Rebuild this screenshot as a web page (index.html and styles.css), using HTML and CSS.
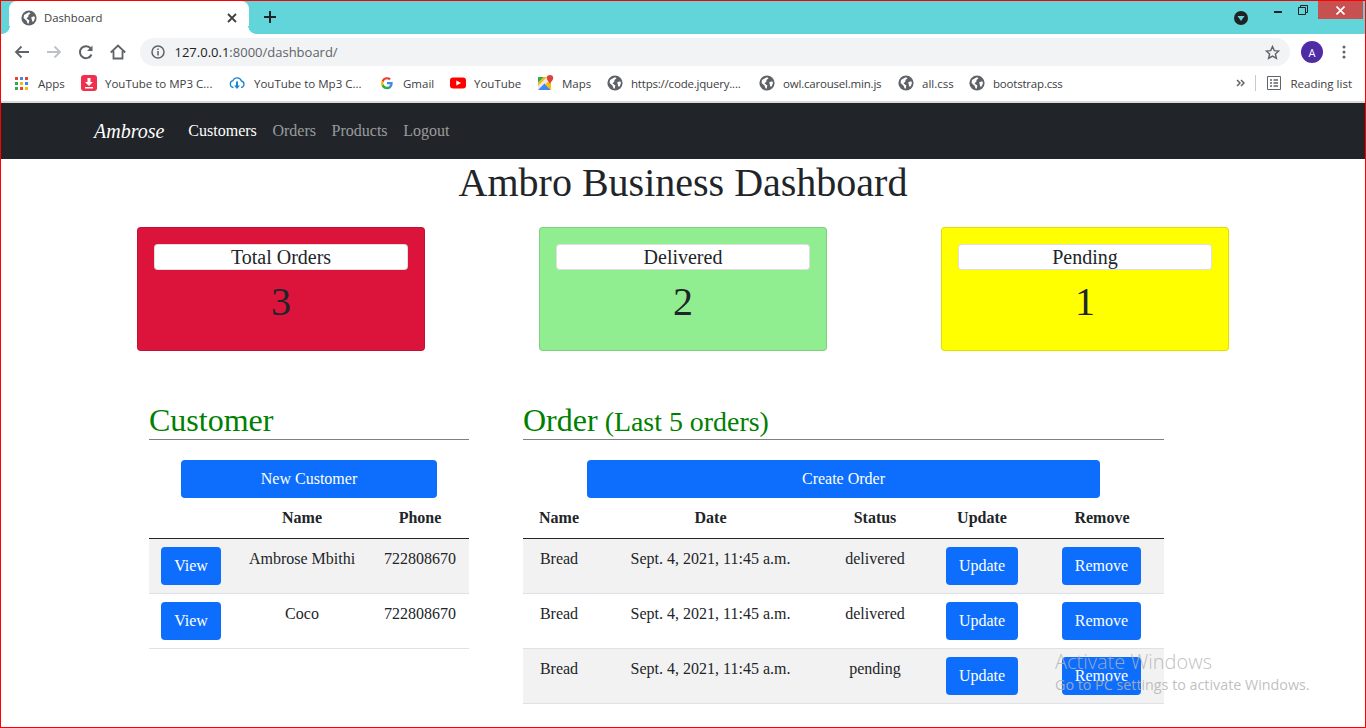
FILE: index.html
```html
<!DOCTYPE html>
<html lang="en">
<head>
<meta charset="utf-8">
<title>Dashboard</title>
<link rel="stylesheet" href="styles.css">
</head>
<body>
<div class="window">
  <svg width="0" height="0" class="defs"><defs>
    <symbol id="globe" viewBox="0 0 16 16"><circle cx="8" cy="8" r="7.6" fill="#5f6368"/><path d="M3 5 L6 3.2 L8 2.2 L9.5 3.2 L7.5 5 L7.3 6.8 L5.5 8.2 L7.2 9.8 L8.3 10.3 L7.8 13.6 L6.6 13.4 L5.6 10.8 L2.6 8 Z M10.2 7.2 L13.2 6.3 L14 8 L12.6 11.4 L11.2 11.4 L10.8 9.4 Z" fill="#fff"/></symbol>
  </defs></svg>
  <div class="tabstrip">
    <div class="tab">
      <svg class="ico16" aria-hidden="true"><use href="#globe"/></svg>
      <span class="tab-title">Dashboard</span>
      <svg class="tab-close" width="10" height="10" viewBox="0 0 10 10"><path d="M1 1 L9 9 M9 1 L1 9" stroke="#3c4043" stroke-width="1.8"/></svg>
    </div>
    <svg class="tab-new" width="12" height="12" viewBox="0 0 12 12"><path d="M6 0 V12 M0 6 H12" stroke="#202124" stroke-width="2"/></svg>
    <div class="win-controls">
      <svg class="profile-drop" width="14" height="14" viewBox="0 0 14 14"><circle cx="7" cy="7" r="7" fill="#202124"/><path d="M3.5 5 H10.5 L7 10 Z" fill="#62d5da"/></svg>
      <svg class="w-min" width="8" height="2" viewBox="0 0 8 2"><rect width="8" height="2" fill="#202124"/></svg>
      <svg class="w-max" width="10" height="10" viewBox="0 0 10 10"><path d="M0.5 2.5 H7.5 V9.5 H0.5 Z M2.5 2.5 V0.5 H9.5 V7.5 H7.5" fill="none" stroke="#202124"/></svg>
      <div class="w-close"><svg width="9" height="9" viewBox="0 0 9 9"><path d="M0.5 0.5 L8.5 8.5 M8.5 0.5 L0.5 8.5" stroke="#fff" stroke-width="1.6"/></svg></div>
    </div>
  </div>
  <div class="toolbar">
    <svg class="tb-ico" width="16" height="16" viewBox="0 0 16 16"><path d="M15 8 H2 M7.5 2.5 L2 8 L7.5 13.5" fill="none" stroke="#5f6368" stroke-width="1.8"/></svg>
    <svg class="tb-ico" width="16" height="16" viewBox="0 0 16 16"><path d="M1 8 H14 M8.5 2.5 L14 8 L8.5 13.5" fill="none" stroke="#bdc1c6" stroke-width="1.8"/></svg>
    <svg class="tb-ico" width="16" height="16" viewBox="0 0 16 16"><path d="M13.5 10.5 A6 6 0 1 1 12.8 4.6" fill="none" stroke="#5f6368" stroke-width="2"/><path d="M14.5 1.5 V7 H9 Z" fill="#5f6368"/></svg>
    <svg class="tb-ico" width="16" height="16" viewBox="0 0 16 16"><path d="M0.8 8.5 L8 1.5 L15.2 8.5 M3.5 7 V14.5 H12.5 V7" fill="none" stroke="#5f6368" stroke-width="1.8"/></svg>
    <div class="omnibox">
      <svg width="14" height="14" viewBox="0 0 14 14"><circle cx="7" cy="7" r="6" fill="none" stroke="#5f6368" stroke-width="1.5"/><path d="M7 6 V10.5 M7 3.5 V5" stroke="#5f6368" stroke-width="1.5"/></svg>
      <span class="url"><span class="url-host">127.0.0.1</span>:8000/dashboard/</span>
      <svg class="star" width="15" height="15" viewBox="0 0 15 15"><path d="M7.5 1.5 L9.3 5.6 L13.8 6 L10.4 9 L11.4 13.4 L7.5 11.1 L3.6 13.4 L4.6 9 L1.2 6 L5.7 5.6 Z" fill="none" stroke="#5f6368" stroke-width="1.4"/></svg>
    </div>
    <div class="avatar">A</div>
    <svg class="menu" width="4" height="14" viewBox="0 0 4 14"><circle cx="2" cy="2" r="1.5" fill="#5f6368"/><circle cx="2" cy="7" r="1.5" fill="#5f6368"/><circle cx="2" cy="12" r="1.5" fill="#5f6368"/></svg>
  </div>
  <div class="bookmarks">
    <a class="bm b-apps">
      <svg class="apps" width="13" height="13" viewBox="0 0 13 13"><rect x="0" y="0" width="3" height="3" fill="#ea4335"/><rect x="5" y="0" width="3" height="3" fill="#4285f4"/><rect x="10" y="0" width="3" height="3" fill="#ea4335"/><rect x="0" y="5" width="3" height="3" fill="#34a853"/><rect x="5" y="5" width="3" height="3" fill="#fbbc05"/><rect x="10" y="5" width="3" height="3" fill="#4285f4"/><rect x="0" y="10" width="3" height="3" fill="#34a853"/><rect x="5" y="10" width="3" height="3" fill="#ea4335"/><rect x="10" y="10" width="3" height="3" fill="#fbbc05"/></svg>
      <span>Apps</span>
    </a>
    <a class="bm b-yt1">
      <svg class="ico16" viewBox="0 0 16 16"><rect width="16" height="16" rx="3" fill="#f1304f"/><path d="M6.5 3 H9.5 V7 H12 L8 11 L4 7 H6.5 Z M4 12 H12 V13.5 H4 Z" fill="#fff"/></svg>
      <span>YouTube to MP3 C...</span>
    </a>
    <a class="bm b-yt2">
      <svg class="ico16" viewBox="0 0 16 16"><path d="M4.5 12.5 A3.5 3.5 0 0 1 4 5.6 A4.5 4.5 0 0 1 12.4 6 A3.3 3.3 0 0 1 12 12.5" fill="none" stroke="#1a86d0" stroke-width="1.3"/><path d="M7 6.5 H9 V10.5 H11 L8 14 L5 10.5 H7 Z" fill="#1a86d0"/></svg>
      <span>YouTube to Mp3 C...</span>
    </a>
    <a class="bm b-gmail">
      <svg class="ico14" viewBox="0 0 16 16"><path d="M14.5 8.2 c0-.5 0-1-.1-1.4 H8 v2.7 h3.7 a3.2 3.2 0 0 1-1.4 2.1 v1.7 h2.2 c1.3-1.2 2-3 2-5.1 z" fill="#4285f4"/><path d="M8 15 c1.9 0 3.4-.6 4.5-1.7 l-2.2-1.7 c-.6.4-1.4.7-2.3.7 -1.8 0-3.3-1.2-3.8-2.8 H1.9 v1.8 A7 7 0 0 0 8 15 z" fill="#34a853"/><path d="M4.2 9.5 a4.2 4.2 0 0 1 0-2.7 V5 H1.9 a7 7 0 0 0 0 6.3 z" fill="#fbbc05"/><path d="M8 3.8 c1 0 1.9.4 2.6 1 l1.9-1.9 A7 7 0 0 0 1.9 5 l2.3 1.8 C4.7 5 6.2 3.8 8 3.8 z" fill="#ea4335"/></svg>
      <span>Gmail</span>
    </a>
    <a class="bm b-youtube">
      <svg class="ico16" viewBox="0 0 16 16"><rect y="2.5" width="16" height="11" rx="3" fill="#f00"/><path d="M6.3 5.5 L11 8 L6.3 10.5 Z" fill="#fff"/></svg>
      <span>YouTube</span>
    </a>
    <a class="bm b-maps">
      <svg class="ico16" viewBox="0 0 16 16"><rect x="0" y="2" width="13" height="13" fill="#e8eaed"/><path d="M0 15 L6.5 8.5 L13 15 Z" fill="#4285f4"/><path d="M0 2 H6 L0 8 Z" fill="#34a853"/><path d="M0 8 L6 2 H9 L0 11 Z" fill="#fbbc05"/><path d="M7 9.5 L13 15 V8 L11 6 Z" fill="#fbbc05"/><path d="M12 0 A3.2 3.2 0 0 1 15.2 3.2 C15.2 5 13 6.5 12 9 C11 6.5 8.8 5 8.8 3.2 A3.2 3.2 0 0 1 12 0 Z" fill="#db4437"/></svg>
      <span>Maps</span>
    </a>
    <a class="bm b-jq tight"><svg class="ico16"><use href="#globe"/></svg><span>https://code.jquery....</span></a>
    <a class="bm b-owl tight"><svg class="ico16"><use href="#globe"/></svg><span>owl.carousel.min.js</span></a>
    <a class="bm b-all"><svg class="ico16"><use href="#globe"/></svg><span>all.css</span></a>
    <a class="bm tight"><svg class="ico16"><use href="#globe"/></svg><span>bootstrap.css</span></a>
    <div class="bm-right">
      <svg width="9" height="8" viewBox="0 0 9 8"><path d="M1 1 L4 4 L1 7 M5 1 L8 4 L5 7" fill="none" stroke="#5f6368" stroke-width="1.5"/></svg>
      <i class="bm-sep"></i>
      <svg width="14" height="14" viewBox="0 0 14 14"><path d="M0.5 0.5 H13.5 V13.5 H0.5 Z" fill="none" stroke="#5f6368"/><path d="M3 4 H5 M6.5 4 H11 M3 7 H5 M6.5 7 H11 M3 10 H5 M6.5 10 H11" stroke="#5f6368" stroke-width="1.3"/></svg>
      <span>Reading list</span>
    </div>
  </div>
  <nav class="navbar">
    <a class="brand">Ambrose</a>
    <a class="nav-link active">Customers</a>
    <a class="nav-link">Orders</a>
    <a class="nav-link">Products</a>
    <a class="nav-link">Logout</a>
  </nav>
  <h1 class="title">Ambro Business Dashboard</h1>
  <section class="stats">
    <div class="stat red"><div class="stat-head">Total Orders</div><div class="stat-num">3</div></div>
    <div class="stat green"><div class="stat-head">Delivered</div><div class="stat-num">2</div></div>
    <div class="stat yellow"><div class="stat-head">Pending</div><div class="stat-num">1</div></div>
  </section>
  <section class="panels">
    <div class="panel panel-customer">
      <h2 class="panel-title">Customer</h2>
      <a class="btn btn-wide btn-new">New Customer</a>
      <table class="tbl">
        <colgroup><col class="c1"><col class="c2"><col class="c3"></colgroup>
        <thead><tr><th></th><th>Name</th><th>Phone</th></tr></thead>
        <tbody>
          <tr><td><a class="btn">View</a></td><td>Ambrose Mbithi</td><td>722808670</td></tr>
          <tr><td><a class="btn">View</a></td><td>Coco</td><td>722808670</td></tr>
        </tbody>
      </table>
    </div>
    <div class="panel panel-order">
      <h2 class="panel-title">Order <small>(Last 5 orders)</small></h2>
      <a class="btn btn-wide btn-create">Create Order</a>
      <table class="tbl">
        <colgroup><col class="o1"><col class="o2"><col class="o3"><col class="o4"><col class="o5"></colgroup>
        <thead><tr><th>Name</th><th>Date</th><th>Status</th><th>Update</th><th>Remove</th></tr></thead>
        <tbody>
          <tr><td>Bread</td><td>Sept. 4, 2021, 11:45 a.m.</td><td>delivered</td><td><a class="btn">Update</a></td><td><a class="btn btn-remove">Remove</a></td></tr>
          <tr><td>Bread</td><td>Sept. 4, 2021, 11:45 a.m.</td><td>delivered</td><td><a class="btn">Update</a></td><td><a class="btn btn-remove">Remove</a></td></tr>
          <tr><td>Bread</td><td>Sept. 4, 2021, 11:45 a.m.</td><td>pending</td><td><a class="btn">Update</a></td><td><a class="btn btn-remove">Remove</a></td></tr>
        </tbody>
      </table>
    </div>
  </section>
  <div class="activate">
    <div class="activate-1">Activate Windows</div>
    <div class="activate-2">Go to PC settings to activate Windows.</div>
  </div>
</div>
</body>
</html>
```

FILE: styles.css
```css
* { box-sizing: border-box; }
html, body { margin: 0; padding: 0; }
body { font-family: "Liberation Serif", "Times New Roman", serif; font-size: 16px; line-height: 24px; color: #212529; background: #fff; overflow: hidden; }
.defs { position: absolute; }
.window { position: relative; width: 1366px; height: 728px; border: 1px solid #f00; overflow: hidden; background: #fff; }
.ico16 { width: 16px; height: 16px; flex: none; }
.ico14 { width: 14px; height: 14px; flex: none; }

.tabstrip { display: flex; align-items: flex-start; height: 33px; background: #62d5da; padding-left: 8px; }
.tab { position: relative; display: flex; align-items: center; width: 240px; height: 33px; padding: 0 12px; background: #fff; border-radius: 8px 8px 0 0; font: 11.3px "Open Sans", "Noto Sans", sans-serif; color: #3c4043; }
.tab::before, .tab::after { content: ""; position: absolute; bottom: 0; width: 8px; height: 8px; }
.tab::before { left: -7px; background: radial-gradient(circle at 0 0, #62d5da 7.5px, #fff 8px); }
.tab::after { right: -7px; background: radial-gradient(circle at 100% 0, #62d5da 7.5px, #fff 8px); }
.tab-title { margin-left: 7px; flex: 1; }
.tab-new { margin: 10px 0 0 15px; }
.win-controls { display: flex; align-items: flex-start; margin-left: auto; }
.profile-drop { margin-top: 10px; }
.w-min { margin: 10px 0 0 26px; }
.w-max { margin: 4px 0 0 16px; }
.w-close { display: flex; align-items: center; justify-content: center; width: 45px; height: 18px; margin-left: 10px; margin-right: 2px; background: #c75050; }

.toolbar { display: flex; align-items: center; height: 34px; padding: 2px 19px 0 13px; background: #fff; }
.tb-ico { margin-right: 16px; flex: none; }
.tb-ico:nth-child(4) { margin-right: 14px; }
.omnibox { display: flex; align-items: center; flex: 1; height: 28px; padding: 0 10px 0 11px; background: #f1f3f4; border-radius: 14px; font: 13px "Open Sans", "Noto Sans", sans-serif; color: #5f6368; }
.url { margin-left: 9.5px; flex: 1; }
.url-host { color: #202124; }
.avatar { display: flex; align-items: center; justify-content: center; width: 22px; height: 22px; margin: 0 19px 0 11px; border-radius: 50%; background: #4f2ca6; color: #fff; font: 11px "Open Sans", sans-serif; }

.bookmarks { display: flex; align-items: center; height: 35px; padding: 0 13px 3px 14px; border-bottom: 2px solid #d9dadc; font: 11.5px "Open Sans", "Noto Sans", sans-serif; color: #3c4043; }
.bm { display: flex; align-items: center; gap: 8px; white-space: nowrap; flex: none; }
.tight { letter-spacing: -.2px; }
.apps { margin-right: 2px; }
.b-apps { width: 66px; }
.b-yt1 { width: 148px; }
.b-yt2 { width: 151px; }
.b-yt2 svg { margin-right: 1px; }
.b-gmail { width: 70px; }
.b-gmail svg { margin-right: 1px; }
.b-youtube { width: 88px; }
.b-maps { width: 69px; }
.b-jq { width: 152px; }
.b-owl { width: 139px; }
.b-all { width: 71px; }
.bm-right { display: flex; align-items: center; margin-left: auto; }
.bm-sep { width: 1px; height: 16px; background: #c8cacc; margin: 0 11px 0 10px; }
.bm-right span { margin-left: 9px; }

.navbar { display: flex; align-items: center; height: 56px; padding-left: 93px; background: #212529; }
.brand { font-size: 20px; font-style: italic; color: #fff; margin-right: 16.2px; }
.nav-link { padding: 0 7.8px; color: rgba(255,255,255,.55); }
.nav-link.active { color: #fff; }

.title { margin: 0; height: 48px; font-size: 40px; font-weight: 400; line-height: 48px; text-align: center; }

.stats { display: flex; justify-content: space-between; width: 1092px; margin: 20px 0 0 136px; }
.stat { width: 288px; height: 124px; padding: 16px; border: 1px solid rgba(0,0,0,.125); border-radius: 4px; text-align: center; }
.red { background: #dc143c; }
.green { background: #90ee90; }
.yellow { background: #ff0; }
.stat-head { height: 26px; background: #fff; border: 1px solid rgba(0,0,0,.125); border-radius: 4px; font-size: 20px; line-height: 24px; }
.stat-num { margin-top: 8px; font-size: 40px; line-height: 48px; }

.panels { display: flex; margin: 50px 0 0 148px; }
.panel-customer { width: 320px; margin-right: 54px; }
.panel-order { width: 641px; }
.panel-title { margin: 0; height: 39px; border-bottom: 1px solid #808080; font-size: 32px; font-weight: 400; line-height: 38px; color: #008000; white-space: nowrap; }
.panel-title small { font-size: 27.9px; margin-left: -1px; }
.btn { display: inline-block; height: 38px; padding: 7px 13px; border-radius: 4px; background: #0d6efd; color: #fff; text-align: center; }
.btn-wide { display: block; margin-top: 20px; }
.btn-new { width: 256px; margin-left: 32px; }
.btn-create { width: 513px; margin-left: 64px; }
.btn-remove { width: 79px; padding: 7px 0; margin-right: 1px; }

.tbl { width: 100%; table-layout: fixed; border-collapse: collapse; text-align: center; }
.tbl th, .tbl td { padding: 8px 0; vertical-align: top; border-bottom: 1px solid #dee2e6; }
.tbl th { font-weight: 700; border-bottom-color: #212529; }
.tbl tbody tr:nth-child(odd) { background: #f2f2f2; }
.c1 { width: 84px; } .c2 { width: 138px; } .c3 { width: 98px; }
.o1 { width: 72px; } .o2 { width: 231px; } .o3 { width: 98px; } .o4 { width: 116px; } .o5 { width: 124px; }

.activate { position: absolute; left: 1054px; top: 647px; color: rgba(180,180,180,.85); font-family: "Open Sans", "Noto Sans", sans-serif; white-space: nowrap; }
.activate-1 { font-size: 20px; line-height: 27px; font-weight: 300; }
.activate-2 { font-size: 14.3px; line-height: 20px; }
```
